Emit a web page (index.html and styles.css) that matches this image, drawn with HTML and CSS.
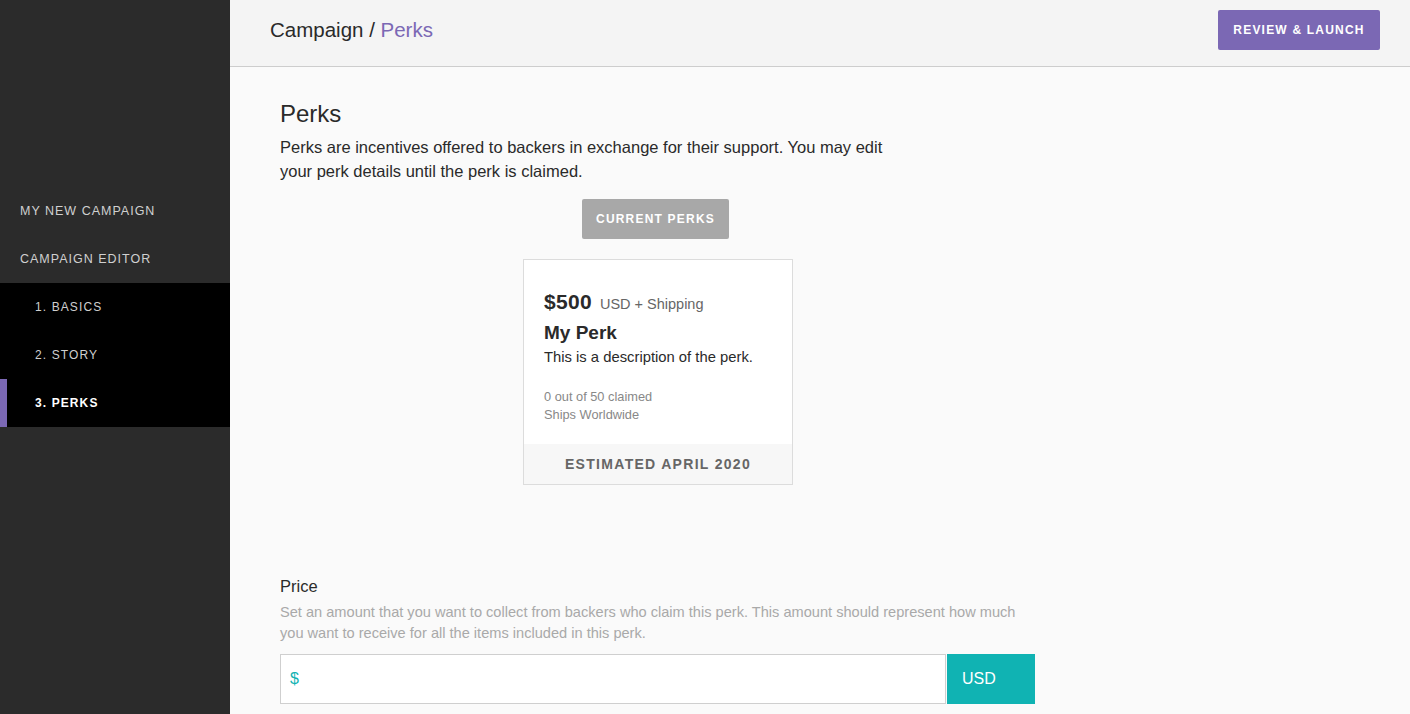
FILE: index.html
```html
<!DOCTYPE html>
<html>
<head>
<meta charset="utf-8">
<link rel="stylesheet" href="styles.css">
</head>
<body>
<div class="app">
  <aside class="sidebar">
    <nav class="nav">
      <div class="nav-item">MY NEW CAMPAIGN</div>
      <div class="nav-item">CAMPAIGN EDITOR</div>
      <div class="subnav">
        <div class="sub-item">1. BASICS</div>
        <div class="sub-item">2. STORY</div>
        <div class="sub-item active">3. PERKS</div>
      </div>
    </nav>
  </aside>
  <div class="main">
    <header class="topbar">
      <div class="crumbs">Campaign / <span class="crumb-current">Perks</span></div>
      <button class="btn-launch">REVIEW &amp; LAUNCH</button>
    </header>
    <section class="content">
      <h1 class="title">Perks</h1>
      <p class="intro">Perks are incentives offered to backers in exchange for their support. You may edit your perk details until the perk is claimed.</p>
      <div class="perks-area">
        <button class="btn-current">CURRENT PERKS</button>
        <div class="perk-card">
          <div class="perk-body">
            <div class="perk-price"><span class="amount">$500</span><span class="currency">USD + Shipping</span></div>
            <div class="perk-name">My Perk</div>
            <div class="perk-desc">This is a description of the perk.</div>
            <div class="perk-meta">0 out of 50 claimed</div>
            <div class="perk-meta">Ships Worldwide</div>
          </div>
          <div class="perk-foot">ESTIMATED APRIL 2020</div>
        </div>
      </div>
      <div class="field">
        <div class="field-label">Price</div>
        <div class="field-help">Set an amount that you want to collect from backers who claim this perk. This amount should represent how much you want to receive for all the items included in this perk.</div>
        <div class="input-row">
          <div class="input-box"><span class="dollar">$</span></div>
          <div class="input-addon">USD</div>
        </div>
      </div>
    </section>
  </div>
</div>
</body>
</html>
```

FILE: styles.css
```css
* { box-sizing: border-box; }
html, body { margin: 0; padding: 0; height: 100%; }
body {
  font-family: "Liberation Sans", Arial, sans-serif;
  color: #2a2a2a;
  background: #fafafa;
  overflow: hidden;
}
.app { display: flex; height: 714px; }
.sidebar {
  width: 230px;
  flex: none;
  background: #2b2b2b;
  padding-top: 187px;
}
.nav-item {
  height: 48px;
  display: flex;
  align-items: center;
  padding-left: 20px;
  font-size: 12.5px;
  letter-spacing: 1px;
  color: #d0d0d0;
}
.subnav { background: #000; }
.sub-item {
  height: 48px;
  display: flex;
  align-items: center;
  font-size: 12px;
  letter-spacing: 1.1px;
  color: #cfcfcf;
  border-left: 7px solid transparent;
  padding-left: 28px;
}
.sub-item.active {
  border-left-color: #7b68b4;
  color: #fff;
  font-weight: bold;
}
.main { flex: 1; display: flex; flex-direction: column; }
.topbar {
  height: 67px;
  flex: none;
  background: #f4f4f4;
  border-bottom: 1px solid #cdcdcd;
  display: flex;
  align-items: center;
  justify-content: space-between;
  padding: 0 30px 0 40px;
}
.crumbs { font-size: 20.5px; color: #2a2a2a; padding-bottom: 6px; }
.crumb-current { color: #7b68b4; }
.btn-launch {
  width: 162px;
  height: 40px;
  margin-bottom: 6px;
  background: #7b68b4;
  border: none;
  border-radius: 2px;
  color: #fff;
  font-family: inherit;
  font-weight: bold;
  font-size: 12px;
  letter-spacing: 1.2px;
}
.content { padding: 32px 50px 0; }
.title { margin: 0; font-size: 24px; font-weight: normal; line-height: 30px; }
.intro {
  margin: 6px 0 0;
  width: 625px;
  font-size: 16.5px;
  line-height: 24px;
  color: #2a2a2a;
}
.perks-area {
  width: 756px;
  display: flex;
  flex-direction: column;
  align-items: center;
  padding-top: 16px;
}
.btn-current {
  width: 147px;
  height: 40px;
  margin-right: 5px;
  background: #a8a8a8;
  border: none;
  border-radius: 2px;
  color: #fff;
  font-family: inherit;
  font-weight: bold;
  font-size: 12px;
  letter-spacing: 1.2px;
}
.perk-card {
  margin-top: 20px;
  width: 270px;
  background: #fff;
  border: 1px solid #dcdcdc;
}
.perk-body { padding: 30px 20px 20px; }
.perk-price { display: flex; align-items: baseline; gap: 8px; }
.amount { font-size: 21px; font-weight: bold; color: #2a2a2a; letter-spacing: 0.3px; }
.currency { font-size: 14.5px; color: #666; }
.perk-name { margin-top: 6px; font-size: 19px; font-weight: bold; line-height: 26px; }
.perk-desc { font-size: 14.8px; line-height: 20px; margin-top: 1px; }
.perk-meta { font-size: 12.8px; color: #888; line-height: 18px; }
.perk-desc + .perk-meta { margin-top: 21px; }
.perk-foot {
  height: 40px;
  background: #f7f7f7;
  display: flex;
  align-items: center;
  justify-content: center;
  font-size: 14px;
  font-weight: bold;
  color: #666;
  letter-spacing: 1.3px;
}
.field { margin-top: 90px; width: 755px; }
.field-label { font-size: 16.5px; line-height: 22px; }
.field-help {
  margin-top: 5px;
  font-size: 14.6px;
  line-height: 21px;
  color: #a9a9a9;
}
.input-row { display: flex; margin-top: 10px; height: 50px; }
.input-box {
  flex: 1;
  background: #fff;
  border: 1px solid #cfcfcf;
  display: flex;
  align-items: center;
  padding-left: 9px;
}
.dollar { color: #12b3b3; font-size: 16px; }
.input-addon {
  width: 88px;
  margin-left: 1px;
  background: #10b3b3;
  color: #fff;
  font-size: 16px;
  display: flex;
  align-items: center;
  padding-left: 15px;
}
```
